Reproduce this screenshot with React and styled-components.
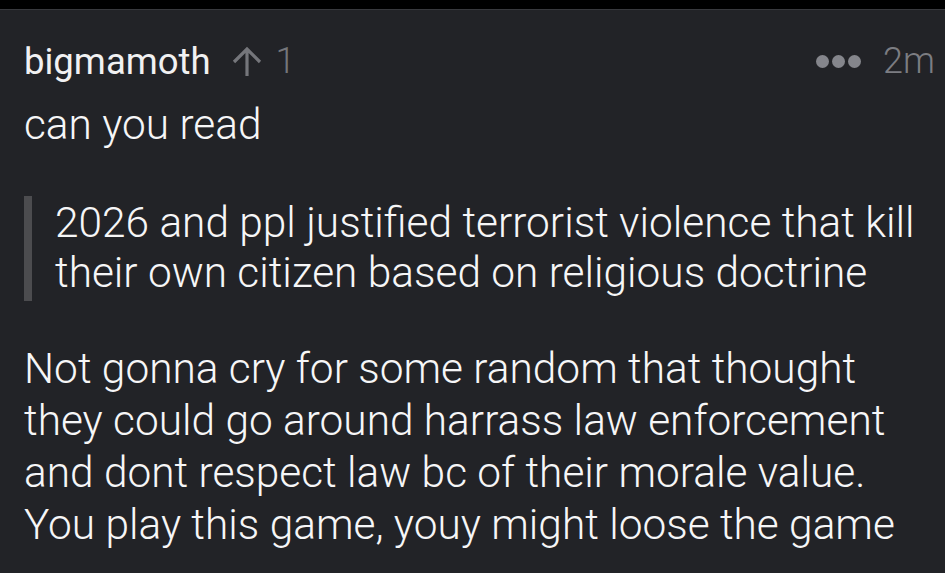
import React from 'react';
import styled, { createGlobalStyle } from 'styled-components';

const GlobalStyle = createGlobalStyle`
  html, body {
    margin: 0;
    padding: 0;
    background: #222327;
  }
  body {
    font-family: Roboto, "Noto Sans", sans-serif;
    -webkit-font-smoothing: antialiased;
  }
`;

const Screen = styled.div`
  width: 945px;
  height: 573px;
  overflow: hidden;
  background: #222327;
  display: flex;
  flex-direction: column;
`;

const StatusStrip = styled.div`
  height: 9px;
  background: #000;
  border-bottom: 1px solid #38393d;
  flex-shrink: 0;
`;

const Comment = styled.article`
  padding: 26px 10px 0 24px;
  color: #f4f4f5;
`;

const Header = styled.div`
  display: flex;
  align-items: center;
  height: 50px;
`;

const Author = styled.span`
  font-size: 36.5px;
  color: #f1f1f2;
`;

const Score = styled.span`
  display: flex;
  align-items: center;
  margin-left: 20px;
  gap: 13px;
  font-size: 36px;
  font-weight: 300;
  color: #75767b;
`;

const Meta = styled.div`
  margin-left: auto;
  display: flex;
  align-items: center;
  gap: 22px;
  color: #7c7d82;
  font-size: 36px;
  font-weight: 300;
`;

const Dots = styled.span`
  display: flex;
  gap: 3px;
  span {
    width: 13px;
    height: 13px;
    border-radius: 50%;
    background: #85868c;
  }
`;

const Paragraph = styled.p`
  margin: ${p => p.$mt || 0}px 14px 0 0;
  font-size: 42.4px;
  font-weight: 300;
  line-height: 52px;
  color: #f6f6f7;
`;

const Quote = styled.blockquote`
  margin: 45px 14px 0 0;
  border-left: 8px solid #4c4c4f;
  padding: 2px 0 3px 23px;
  font-size: 42.4px;
  font-weight: 300;
  line-height: 50px;
  color: #f6f6f7;
`;

function ArrowUp() {
  return (
    <svg width="32" height="32" viewBox="0 0 32 32" fill="none" stroke="#75767b" strokeWidth="3.2" strokeLinecap="butt" strokeLinejoin="miter">
      <path d="M16 31V4M3 17L16 4l13 13" />
    </svg>
  );
}

export default function App() {
  return (
    <Screen>
      <GlobalStyle />
      <StatusStrip />
      <Comment>
        <Header>
          <Author>bigmamoth</Author>
          <Score>
            <ArrowUp />
            1
          </Score>
          <Meta>
            <Dots><span /><span /><span /></Dots>
            2m
          </Meta>
        </Header>
        <Paragraph $mt={13}>can you read</Paragraph>
        <Quote>
          2026 and ppl justified terrorist violence that kill their own citizen based on religious doctrine
        </Quote>
        <Paragraph $mt={42}>
          Not gonna cry for some random that thought they could go around harrass law enforcement and dont respect law bc of their morale value. You play this game, youy might loose the game
        </Paragraph>
      </Comment>
    </Screen>
  );
}
